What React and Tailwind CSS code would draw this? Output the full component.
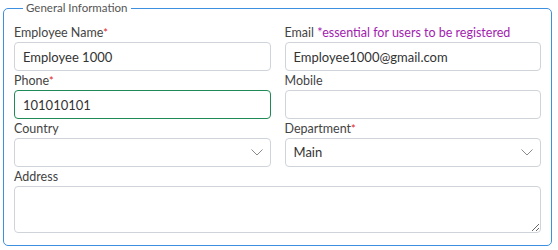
import { useState } from "react";

const Label = ({ children, required, hint }) => (
  <label className="block text-[12.5px] leading-[19px] text-[#444]">
    {children}
    {required && <span className="text-[#e02424] text-[11px] align-top">*</span>}
    {hint && <span className="text-[#a21caf]"> {hint}</span>}
  </label>
);

const Chevron = () => (
  <svg className="absolute right-[8px] top-[11px] text-[#8a8a8a]" width="12" height="7" viewBox="0 0 12 7" fill="none">
    <path d="M0.5 0.5 L6 6 L11.5 0.5" stroke="currentColor" strokeWidth="1" />
  </svg>
);

const inputCls =
  "block w-full h-[29px] rounded-[4px] border border-[#cfd4da] bg-white px-[8px] text-[13px] text-[#333] outline-none";

export default function App() {
  const [form, setForm] = useState({
    name: "Employee 1000",
    email: "Employee1000@gmail.com",
    phone: "101010101",
    mobile: "",
    department: "Main",
  });
  const set = (k) => (e) => setForm({ ...form, [k]: e.target.value });

  return (
    <div className="bg-white w-[558px] h-[250px] pt-[1px]" style={{ fontFamily: "Lato, sans-serif" }}>
      <fieldset className="ml-[3px] w-[549px] h-[245px] rounded-[5px] border border-[#3d8fe0] px-[10px] pt-[8px]">
        <legend className="ml-[9px] px-[3px] text-[11.5px] leading-[14px] text-[#555]">General Information</legend>
        <div className="grid grid-cols-2 gap-x-[14px]">
          <div>
            <Label required>Employee Name</Label>
            <input className={inputCls} value={form.name} onChange={set("name")} />
          </div>
          <div>
            <Label hint="*essential for users to be registered">Email</Label>
            <input className={inputCls} value={form.email} onChange={set("email")} />
          </div>
          <div>
            <Label required>Phone</Label>
            <input className={inputCls + " !border-[#1f8a55]"} value={form.phone} onChange={set("phone")} />
          </div>
          <div>
            <Label>Mobile</Label>
            <input className={inputCls} value={form.mobile} onChange={set("mobile")} />
          </div>
          <div>
            <Label>Country</Label>
            <div className="relative">
              <div className={inputCls}></div>
              <Chevron />
            </div>
          </div>
          <div>
            <Label required>Department</Label>
            <div className="relative">
              <div className={inputCls + " leading-[27px]"}>{form.department}</div>
              <Chevron />
            </div>
          </div>
          <div className="col-span-2">
            <Label>Address</Label>
            <textarea className="block w-full h-[47px] rounded-[4px] border border-[#cfd4da] px-[8px] text-[13px] outline-none" />
          </div>
        </div>
      </fieldset>
    </div>
  );
}
